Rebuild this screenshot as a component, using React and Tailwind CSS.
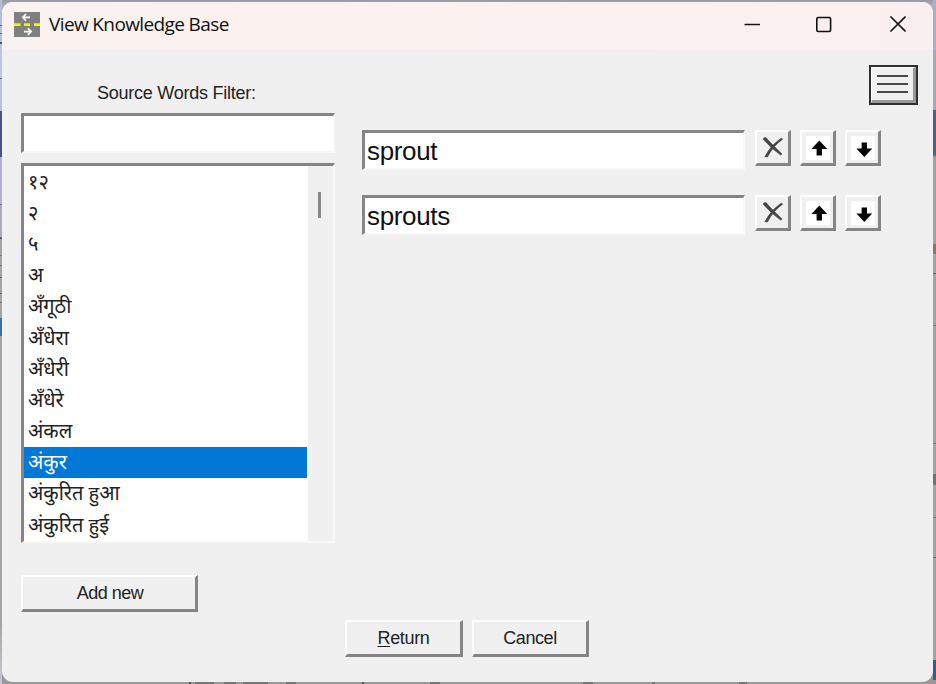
const words = ["१२", "२", "५", "अ", "अँगूठी", "अँधेरा", "अँधेरी", "अँधेरे", "अंकल", "अंकुर", "अंकुरित हुआ", "अंकुरित हुई"];

const raised = "border-t-2 border-l-2 border-r-[3px] border-b-[3px] border-t-white border-l-white border-r-[#858585] border-b-[#858585] bg-[#f0f0f0]";
const sunken = "border-t-[3px] border-l-[3px] border-r-2 border-b-2 border-t-[#858585] border-l-[#858585] border-r-[#f8f8f8] border-b-[#f8f8f8] bg-white";

function AppIcon() {
  return (
    <svg className="h-[25px] w-[26px]" viewBox="0 0 26 25">
      <rect width="26" height="25" fill="#808080" />
      <path d="M0 12.6H6.5M10 12.6H16M20 12.6H26" stroke="#f1f500" strokeWidth="2.8" />
      <path d="M16 5.4H8.7M12 2L8.7 5.4L12 8.8M10 19.6H17M13.8 16.2L17.2 19.6L13.8 23" fill="none" stroke="#fff" strokeWidth="1.6" />
    </svg>
  );
}

function Cross() {
  return (
    <svg className="h-[31px] w-[31px]" viewBox="0 0 31 31">
      <path d="M6.5 6L9 5.6C14 11.5 19 16.5 25 22L24 23.2C17.5 18.5 11 13 6.5 7.5Z" fill="#444" stroke="#444" strokeWidth="0.6" strokeLinejoin="round" />
      <path d="M24.5 6L25.6 7.2C19 12 14 18 10.5 25L7.8 24.8C12 17 17 11 24.5 6Z" fill="#444" stroke="#444" strokeWidth="0.6" strokeLinejoin="round" />
    </svg>
  );
}

function Arrow({ down }) {
  return (
    <svg className="h-[31px] w-[31px]" viewBox="0 0 31 31">
      <rect x="4" y="4" width="24" height="24" fill="#fff" />
      <path
        d={down ? "M14.6 10.5H20V16.5H25.2L17.3 25L9.4 16.5H14.6Z" : "M17.3 8.5L25.2 17H20V23.5H14.6V17H9.4Z"}
        fill="#000"
      />
    </svg>
  );
}

function Entry({ text }) {
  return (
    <div className="flex h-[41px] items-start">
      <div className={`flex h-[40px] w-[383px] items-center pl-[2px] font-['Liberation_Sans',sans-serif] text-[26px] leading-none text-[#111] ${sunken}`}>
        <span className="tracking-[-0.35px]">{text}</span>
      </div>
      <div className="ml-[10px] flex gap-[9px]">
        <button className={`h-[36px] w-[36px] ${raised}`}><Cross /></button>
        <button className={`h-[36px] w-[36px] ${raised}`}><Arrow /></button>
        <button className={`h-[36px] w-[36px] ${raised}`}><Arrow down /></button>
      </div>
    </div>
  );
}

export default function App() {
  return (
    <div className="grid h-[684px] w-[936px] grid-cols-[2px_931px_3px] overflow-hidden bg-[linear-gradient(to_bottom,#9698a4_0px,#b0b3c2_6px,#a4a4a4_20px,#989898_684px)]">
      {/* slivers of the windows behind the dialog */}
      <div className="bg-[linear-gradient(to_bottom,#b5bddc_25px,#5c6486_25px_26px,#b5bddc_26px_33px,#5c6486_33px_34px,#b5bddc_34px_42px,#4c5680_42px_44px,#c0c4e2_44px_78px,#65698a_78px_79px,#bcbfe0_79px_111px,#4b5380_111px_157px,#b3b2cc_157px_204px,#77778c_204px_205px,#acacb8_205px_237px,#666_237px_239px,#a4a4a4_239px_255px,#777_255px_256px,#a4a4a4_256px_265px,#777_265px_266px,#a4a4a4_266px_277px,#666_277px_278px,#a4a4a4_278px_293px,#666_293px_294px,#a4a4a4_294px_302px,#777_302px_303px,#a4a4a4_303px_318px,#3f6f9e_318px_336px,#a4a4a4_336px_620px,#c5c8d0_684px)]" />
      <div className="pt-[2px]">
        <div className="flex h-[680px] w-[931px] flex-col overflow-hidden rounded-[11px] bg-[#f0f0f0] font-['Liberation_Sans',sans-serif] text-[18px] leading-none text-[#222]">
          <header className="flex h-[48px] shrink-0 items-start bg-[linear-gradient(to_right,#f9f2ee,#fbf1ef_45%,#f9eff0)] pl-[12px] pt-[10px]">
            <AppIcon />
            <h1 className="ml-[9px] mt-[3px] whitespace-nowrap font-['Open_Sans',sans-serif] text-[19px] leading-[19px] tracking-[-0.62px] text-[#111]">View Knowledge Base</h1>
            <svg className="ml-auto mr-[27px] mt-[3px] h-[18px] w-[164px]" viewBox="0 0 164 18" fill="none" stroke="#111" strokeWidth="1.6">
              <path d="M2.5 9.5H18" strokeWidth="1.3" />
              <rect x="74.8" y="2.5" width="13.8" height="14" rx="1.5" />
              <path d="M148.5 1.5L163.5 16.5M163.5 1.5L148.5 16.5" />
            </svg>
          </header>

          <main className="flex h-[568px] shrink-0 pl-[19px]">
            <section className="w-[314px]">
              <div className="h-[63px] pl-[76px] pt-[34px] tracking-[-0.25px]"><span>Source Words Filter:</span></div>
              <div className={`h-[40px] w-full ${sunken}`} />
              <div className={`mt-[10px] flex h-[380px] w-full ${sunken}`}>
                <ul className="w-[283px] overflow-hidden bg-white font-['Noto_Sans','Noto_Sans_Devanagari',sans-serif] text-[20px]">
                  {words.map((word) => (
                    <li key={word} className={`flex h-[31.2px] items-center whitespace-nowrap pl-[4px] ${word === "अंकुर" ? "bg-[#0078d7] text-white" : "text-[#222]"}`}>
                      <span>{word}</span>
                    </li>
                  ))}
                </ul>
                <div className="ml-px flex-1 bg-[#f0f0f0] pl-[10px] pt-[26px]">
                  <div className="h-[26px] w-[3px] bg-[#888]" />
                </div>
              </div>
              <button className={`mt-[32px] flex h-[37px] w-[177px] items-center justify-center pl-[2px] tracking-[-0.5px] ${raised}`}>Add new</button>
            </section>

            <section className="ml-[27px] flex-1">
              <div className="flex justify-end pr-[15px] pt-[15px]">
                <button className="h-[40px] w-[49px] border-2 border-[#303030] bg-[#f0f0f0]">
                  <div className="flex h-full w-full flex-col justify-center gap-[6px] border-r-[3px] border-b-[3px] border-t border-l border-t-white border-l-white border-r-[#999] border-b-[#999] px-[5px]">
                    <i className="h-[2px] bg-[#484848]" />
                    <i className="h-[2px] bg-[#484848]" />
                    <i className="h-[2px] bg-[#484848]" />
                  </div>
                </button>
              </div>
              <div className="mt-[25px] flex flex-col gap-[24px]">
                <Entry text="sprout" />
                <Entry text="sprouts" />
              </div>
            </section>
          </main>

          <footer className="flex gap-[9px] pl-[343px] pt-[2px]">
            <button className={`flex h-[37px] w-[118px] items-center justify-center tracking-[-0.35px] ${raised}`}><span><u className="underline decoration-1 underline-offset-2">R</u>eturn</span></button>
            <button className={`flex h-[37px] w-[117px] items-center justify-center tracking-[-0.4px] ${raised}`}>Cancel</button>
          </footer>
        </div>
        <div className="h-[2px] bg-[linear-gradient(to_right,#999_187px,#555_187px_189px,#999_189px_193px,#777_193px_212px,#999_212px_222px,#777_222px_234px,#999_234px_241px,#777_241px_266px,#999_266px_284px,#777_284px_294px,#999_294px_360px,#555_360px_362px,#999_362px_428px,#777_428px_438px,#999_438px_581px,#777_581px_591px,#999_591px_650px,#777_650px_653px,#999_653px_737px,#777_737px_745px,#999_745px)]" />
      </div>
      <div className="bg-[linear-gradient(to_bottom,#aab0cc_50px,#a8a8b4_50px_110px,#536083_110px_155px,#b09b85_157px_160px,#a4a4a4_160px_244px,#8b7565_244px_254px,#a4a4a4_254px_273px,#666_273px_274px,#a4a4a4_274px_325px,#777_325px_326px,#a4a4a4_326px_443px,#777_443px_444px,#a4a4a4_444px_474px,#776f70_474px_485px,#a4a4a4_485px_517px,#777_517px_518px,#a4a4a4_518px_557px,#666_557px_558px,#a4a4a4_558px_660px,#315f93_660px_680px,#989898_680px)]" />
    </div>
  );
}
